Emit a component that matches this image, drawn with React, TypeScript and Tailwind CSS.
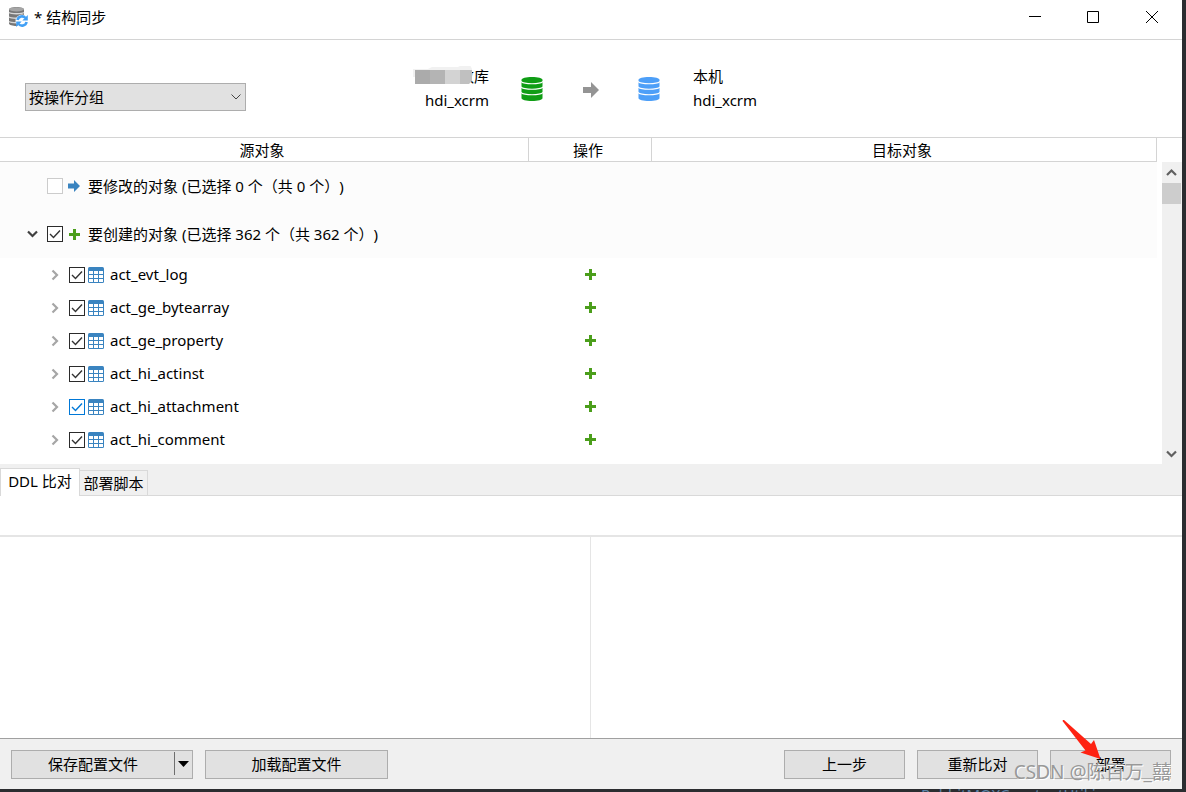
import { useState } from 'react';

interface CheckBoxProps {
    label: string;
    checked: boolean;
    onChange: (checked: boolean) => void;
    tone?: 'normal' | 'focus' | 'muted';
}

const boxTones = {
    normal: 'border-[#2b2b2b] text-[#333333]',
    focus: 'border-[#0078d7] text-[#0078d7]',
    muted: 'border-[#cccccc] text-[#cccccc]'
};

function CheckBox({ label, checked, onChange, tone = 'normal' }: CheckBoxProps) {
    return (
        <span className={`grid h-4 w-4 shrink-0 ${boxTones[tone]}`}>
            <input
                type="checkbox"
                aria-label={label}
                checked={checked}
                onChange={(e) => onChange(e.target.checked)}
                className="col-start-1 row-start-1 h-4 w-4 appearance-none border border-inherit bg-white"
            />
            {checked && (
                <svg className="pointer-events-none col-start-1 row-start-1 h-4 w-4" fill="none" stroke="currentColor" viewBox="0 0 16 16">
                    <path strokeWidth={1.4} d="M3 8l3.5 3.5L13 4.5" />
                </svg>
            )}
        </span>
    );
}

function DatabaseIcon({ className }: { className: string }) {
    return (
        <svg className={`h-6 w-[22px] shrink-0 ${className}`} fill="currentColor" viewBox="0 0 22 24">
            <path d="M0.5 3C0.5 1.2 5 0 11 0s10.500 1.200 10.500 3v18c0 1.800-4.500 3-10.500 3S0.500 22.800 0.500 21z" />
            <path
                fill="none"
                stroke="white"
                strokeWidth={1.1}
                d="M0 4.500c1.500 1.600 6 2.200 11 2.200s9.500-.6 11-2.200M0 10c1.500 1.600 6 2.200 11 2.200s9.500-.6 11-2.200M0 15.500c1.500 1.600 6 2.200 11 2.200s9.500-.6 11-2.200"
            />
        </svg>
    );
}

function AppIcon() {
    return (
        <svg className="h-5 w-5 shrink-0" viewBox="0 0 20 20">
            <path fill="#777777" d="M1 2.500C1 1 4.500 0 8.500 0S16 1 16 2.500v14c0 1.500-3.500 2.500-7.500 2.500S1 18 1 16.500z" />
            <ellipse cx="8.500" cy="2.300" rx="7.500" ry="2.100" fill="#a5a5a5" />
            <path fill="none" stroke="#d8d8d8" strokeWidth={1.5} d="M1 5.500c2 1.500 13 1.500 15 0M1 10c2 1.500 13 1.500 15 0M1 14.500c2 1.500 13 1.500 15 0" />
            <circle cx="14" cy="14" r="6.500" fill="white" />
            <path fill="none" stroke="#42a0f5" strokeWidth={2.6} d="M9.500 13a4.600 4.600 0 0 1 8-2M18.600 15a4.600 4.600 0 0 1-8 2" />
            <path fill="#42a0f5" d="M19.800 8v5.500h-5.500zM8.200 20v-5.500h5.500z" />
        </svg>
    );
}

function PlusIcon() {
    return (
        <svg className="h-[11px] w-[11px] shrink-0" fill="#4b9e1b" viewBox="0 0 11 11">
            <path d="M4 0h3v4h4v3H7v4H4V7H0V4h4z" />
        </svg>
    );
}

function ArrowIcon() {
    return (
        <svg className="h-3 w-3 shrink-0" fill="#3a84c0" viewBox="0 0 12 12">
            <path d="M0 3.500h6V0l6 6-6 6V8.500H0z" />
        </svg>
    );
}

function TableIcon() {
    return (
        <svg className="h-4 w-4 shrink-0" viewBox="0 0 16 16">
            <rect width="16" height="16" rx="1.500" fill="#3a84c0" />
            <path
                fill="white"
                d="M1 4h4v3H1zM6 4h4v3H6zM11 4h4v3h-4zM1 8h4v3H1zM6 8h4v3H6zM11 8h4v3h-4zM1 12h4v3H1zM6 12h4v3H6zM11 12h4v3h-4z"
            />
        </svg>
    );
}

const chevrons = {
    down: 'M2 4.500l4.500 4.500L11 4.500',
    up: 'M2 9L6.500 4.500l4.500 4.500',
    right: 'M4.500 2.500L9 7l-4.500 4.500'
};

function Chevron({ direction, className }: { direction: 'down' | 'up' | 'right'; className: string }) {
    return (
        <svg className={`h-[14px] w-[14px] shrink-0 ${className}`} fill="none" stroke="currentColor" viewBox="0 0 14 14">
            <path strokeWidth={2.2} d={chevrons[direction]} />
        </svg>
    );
}

const tables = ['act_evt_log', 'act_ge_bytearray', 'act_ge_property', 'act_hi_actinst', 'act_hi_attachment', 'act_hi_comment'];

const headStyle = 'border-r border-b border-[#d4d4d4] py-0 pr-1 pl-0 font-normal';

const buttonStyle = 'h-[29px] border border-[#adadad] bg-[#e1e1e1] pb-0.5 hover:border-[#0078d7] hover:bg-[#e5f1fb]';

function TitleBar() {
    return (
        <header className="flex h-10 items-start justify-between border-b border-[#d4d4d4]">
            <div className="flex items-center pt-[5px] pl-2">
                <AppIcon />
                <h1 className="ml-[6px]">* 结构同步</h1>
            </div>
            <div className="flex h-[34px]">
                <button type="button" aria-label="最小化" className="grid w-[58px] place-items-center">
                    <svg className="h-3 w-3" stroke="black" viewBox="0 0 12 12">
                        <path d="M0 5.500h12" />
                    </svg>
                </button>
                <button type="button" aria-label="最大化" className="grid w-[58px] place-items-center">
                    <svg className="h-3 w-3" fill="none" stroke="black" viewBox="0 0 12 12">
                        <path d="M.5.5h11v11H.5z" />
                    </svg>
                </button>
                <button type="button" aria-label="关闭" className="grid w-[60px] place-items-center">
                    <svg className="h-3 w-3" stroke="black" viewBox="0 0 12 12">
                        <path d="M0 0l12 12M12 0L0 12" />
                    </svg>
                </button>
            </div>
        </header>
    );
}

function ConnectionBar() {
    return (
        <section className="flex h-[97px] items-start">
            <div className="relative mt-[43px] ml-[25px] w-[221px]">
                <select
                    aria-label="分组方式"
                    className="h-7 w-full appearance-none border border-[#adadad] bg-[#e1e1e1] pl-[3px]"
                >
                    <option>按操作分组</option>
                    <option>按对象类型分组</option>
                </select>
                <svg className="pointer-events-none absolute top-[11px] right-[5px] h-[6px] w-[10px]" fill="none" stroke="#444444" viewBox="0 0 10 6">
                    <path d="M.5.5L5 5 9.500.5" />
                </svg>
            </div>
            <div className="mt-6 flex items-start">
                <div className="relative w-[243px] text-right leading-6">
                    <p>数库</p>
                    <p>hdi_xcrm</p>
                    <svg className="absolute top-[2px] right-[16px] h-[24px] w-[60px]" viewBox="0 0 60 24">
                        <path fill="#f1f1f1" d="M0 3h15l4-2h26l4-2h8l2 4v8H0z" />
                        <path fill="#ababab" d="M2 4h15v14H2z" />
                        <path fill="#b4b4b4" d="M17 4h15v14H17z" />
                        <path fill="#d3d3d3" d="M32 4h15v14H32z" />
                        <path fill="#c0c0c0" d="M47 4h12v11l-3 3h-9z" />
                    </svg>
                </div>
                <DatabaseIcon className="mt-[13px] ml-8 text-[#0f9d15]" />
                <svg className="mr-[39px] ml-10 mt-[18px] h-4 w-4" fill="#949494" viewBox="0 0 16 16">
                    <path d="M0 5h8V0l8 8-8 8v-5H0z" />
                </svg>
                <DatabaseIcon className="mt-[13px] text-[#4d9ff8]" />
                <div className="ml-[33px] leading-6">
                    <p>本机</p>
                    <p>hdi_xcrm</p>
                </div>
            </div>
        </section>
    );
}

function ObjectTree() {
    const [selected, setSelected] = useState<string[]>(tables);
    const [modify, setModify] = useState(false);
    const [create, setCreate] = useState(true);

    const toggle = (name: string, on: boolean) =>
        setSelected(on ? [...selected, name] : selected.filter((item) => item !== name));

    return (
        <section className="flex border-t border-[#d4d4d4]">
            <div className="min-w-0 flex-1 pb-2">
                <table className="w-full table-fixed border-separate border-spacing-0">
                    <colgroup>
                        <col className="w-[529px]" />
                        <col className="w-[123px]" />
                        <col />
                        <col className="w-[5px]" />
                    </colgroup>
                    <thead>
                        <tr className="h-6 leading-5">
                            <th className={headStyle}>源对象</th>
                            <th className={headStyle}>操作</th>
                            <th className={headStyle}>目标对象</th>
                            <td />
                        </tr>
                    </thead>
                    <tbody>
                        <tr className="h-12">
                            <td colSpan={3} className="bg-[#fcfcfc] p-0">
                                <div className="flex items-center pl-[47px]">
                                    <CheckBox label="要修改的对象" checked={modify} onChange={setModify} tone="muted" />
                                    <span className="ml-[5px] flex w-5">
                                        <ArrowIcon />
                                    </span>
                                    <span className="[text-spacing-trim:space-all]">要修改的对象 (已选择 0 个（共 0 个）)</span>
                                </div>
                            </td>
                            <td />
                        </tr>
                        <tr className="h-12">
                            <td colSpan={3} className="bg-[#fcfcfc] p-0">
                                <div className="flex items-center pl-[26px]">
                                    <button type="button" aria-label="折叠">
                                        <Chevron direction="down" className="text-[#404040]" />
                                    </button>
                                    <span className="ml-[7px]">
                                        <CheckBox label="要创建的对象" checked={create} onChange={setCreate} />
                                    </span>
                                    <span className="ml-[6px] flex w-[19px]">
                                        <PlusIcon />
                                    </span>
                                    <span className="[text-spacing-trim:space-all]">要创建的对象 (已选择 362 个（共 362 个）)</span>
                                </div>
                            </td>
                            <td />
                        </tr>
                        {tables.map((name) => (
                            <tr key={name} className="h-[33px]">
                                <td className="p-0">
                                    <div className="flex items-center pl-12">
                                        <button type="button" aria-label={`展开 ${name}`}>
                                            <Chevron direction="right" className="text-[#a6a6a6]" />
                                        </button>
                                        <span className="ml-[7px]">
                                            <CheckBox
                                                label={name}
                                                checked={selected.includes(name)}
                                                onChange={(on) => toggle(name, on)}
                                                tone={name === 'act_hi_attachment' ? 'focus' : 'normal'}
                                            />
                                        </span>
                                        <span className="mr-[6px] ml-[3px]">
                                            <TableIcon />
                                        </span>
                                        <span className="pb-0.5">{name}</span>
                                    </div>
                                </td>
                                <td className="p-0">
                                    <div className="flex justify-center">
                                        <PlusIcon />
                                    </div>
                                </td>
                                <td />
                                <td />
                            </tr>
                        ))}
                    </tbody>
                </table>
            </div>
            <div className="mt-6 flex w-5 flex-col items-center bg-[#f0f0f0]">
                <button type="button" aria-label="向上滚动" className="grid h-[21px] w-full place-items-center">
                    <Chevron direction="up" className="text-[#606060]" />
                </button>
                <div className="mr-px h-[21px] w-[19px] bg-[#cdcdcd]" />
                <button type="button" aria-label="向下滚动" className="mt-auto grid h-[21px] w-full place-items-center">
                    <Chevron direction="down" className="text-[#606060]" />
                </button>
            </div>
        </section>
    );
}

function ComparePanel() {
    return (
        <section className="flex flex-1 flex-col">
            <div role="tablist" className="flex h-8 items-end border-b border-[#d9d9d9] bg-[#f0f0f0]">
                <button
                    type="button"
                    role="tab"
                    aria-selected="true"
                    className="-mb-px h-7 w-20 border border-b-0 border-[#d9d9d9] bg-white pb-1 leading-5"
                >
                    DDL 比对
                </button>
                <button
                    type="button"
                    role="tab"
                    aria-selected="false"
                    className="h-[25px] w-[68px] border border-b-0 border-l-0 border-[#d9d9d9] leading-5"
                >
                    部署脚本
                </button>
            </div>
            <div className="h-[39px] bg-white" />
            <div className="grid flex-1 grid-cols-2 border-t-2 border-[#e5e5e5]">
                <div className="border-r border-[#e5e5e5]" />
                <div />
            </div>
        </section>
    );
}

function Footer() {
    return (
        <footer className="relative flex items-center justify-between border-t border-[#a0a0a0] bg-[#f0f0f0] px-[11px] pt-[11px] pb-[10px]">
            <div className="flex gap-3">
                <div className="flex w-[182px]">
                    <button type="button" className={`flex-1 border-r-0 ${buttonStyle}`}>
                        保存配置文件
                    </button>
                    <button type="button" aria-label="更多保存选项" className={`flex w-[19px] items-center border-l-0 ${buttonStyle}`}>
                        <span className="h-[23px] w-px bg-[#6e6e6e]" />
                        <svg className="ml-[3px] h-[6px] w-[11px]" viewBox="0 0 11 6">
                            <path d="M0 0h11L5.500 6z" />
                        </svg>
                    </button>
                </div>
                <button type="button" className={`w-[183px] ${buttonStyle}`}>
                    加载配置文件
                </button>
            </div>
            <div className="flex gap-3">
                <button type="button" className={`w-[121px] ${buttonStyle}`}>
                    上一步
                </button>
                <button type="button" className={`w-[121px] ${buttonStyle}`}>
                    重新比对
                </button>
                <button type="button" className={`w-[121px] ${buttonStyle}`}>
                    部署
                </button>
            </div>
            <svg className="pointer-events-none absolute right-[80px] bottom-[29px] h-[42px] w-[42px]" fill="#fe2212" viewBox="0 0 42 42">
                <path d="M3 2l1 0L31 26l3-4 6.500 19L20.500 34.500l5-2L2.500 3z" />
            </svg>
            <p className="pointer-events-none absolute right-[11px] bottom-[3px] text-[19px] leading-7 text-[#999999] [text-shadow:1px_1px_0_#ffffff]">
                CSDN @陈百万_囍
            </p>
        </footer>
    );
}

export default function App() {
    return (
        <div className="flex min-h-screen flex-col bg-[#2b2d30] pr-1 font-['Noto_Sans','Noto_Sans_CJK_SC',sans-serif] text-[15px] leading-6 text-black">
            <main className="flex flex-1 flex-col bg-white">
                <TitleBar />
                <ConnectionBar />
                <ObjectTree />
                <ComparePanel />
                <Footer />
            </main>
            <div className="flex h-[3px] justify-end overflow-hidden pr-[62px] text-[#5c83a8]">
                <p className="leading-[10px]">RabbitMQXConstantUtil.java</p>
            </div>
        </div>
    );
}
